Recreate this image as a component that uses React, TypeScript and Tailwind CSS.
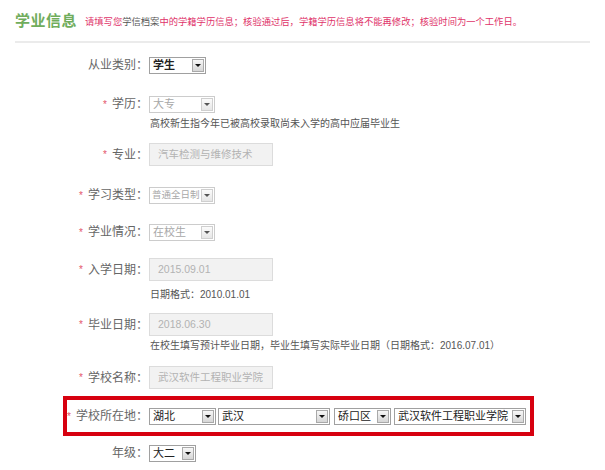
import type { ReactNode } from "react";

type SelectProps = {
  value: string;
  width: string;
  disabled?: boolean;
  bold?: boolean;
  tight?: boolean;
};

const Arrow = ({ disabled }: { disabled?: boolean }) => (
  <span
    className={
      disabled
        ? "flex h-[13px] w-[12px] shrink-0 items-center justify-center border border-[#cfcfcf] bg-gradient-to-b from-[#fbfbfb] to-[#e6e6e6]"
        : "flex h-[13px] w-[12px] shrink-0 items-center justify-center border border-[#a9a9a9] bg-gradient-to-b from-[#f7f7f7] to-[#d6d6d6]"
    }
  >
    <span
      className={
        disabled
          ? "h-0 w-0 border-x-[3px] border-t-[3px] border-x-transparent border-t-[#555]"
          : "h-0 w-0 border-x-[3px] border-t-[3px] border-x-transparent border-t-[#111]"
      }
    />
  </span>
);

const Select = ({ value, width, disabled, bold, tight }: SelectProps) => (
  <div
    className={`${width} flex h-[17px] items-center justify-between bg-white pr-[1px] leading-none ${
      tight ? "pl-[2px] text-[9.5px]" : "pl-[3px] text-[11px]"
    } ${
      disabled
        ? "border border-[#cccccc] text-[#a8a8a8]"
        : "border border-[#a0a0a0] text-[#222]"
    } ${bold ? "font-semibold" : ""}`}
  >
    <span className="whitespace-nowrap">{value}</span>
    <Arrow disabled={disabled} />
  </div>
);

const Field = ({ value }: { value: string }) => (
  <div className="flex h-[23px] w-[124px] items-center border border-[#dcdcdc] bg-[#f2f2f2] pl-[8px] text-[10.5px] text-[#b3b3b3]">
    {value}
  </div>
);

type RowProps = {
  label: string;
  required?: boolean;
  className: string;
  children: ReactNode;
};

const Row = ({ label, required, className, children }: RowProps) => (
  <div className={`flex items-center ${className}`}>
    <div className="flex w-[149px] shrink-0 items-center justify-end pr-[1px] text-[12px] text-[#666]">
      {required && <span className="mr-[5px] text-[10px] text-[#e4566a]">*</span>}
      <span>{label}：</span>
    </div>
    {children}
  </div>
);

const Hint = ({ text, className }: { text: string; className: string }) => (
  <div className={`pl-[150px] text-[10px] leading-[14px] text-[#555] ${className}`}>{text}</div>
);

export default function App() {
  return (
    <div className="h-[470px] w-[605px] overflow-hidden bg-white font-['Liberation_Sans','Noto_Sans_CJK_SC',sans-serif]">
      <div className="flex h-[20px] items-center pl-[15px] pt-[11px] box-content">
        <h2 className="text-[15px] font-semibold tracking-[0.5px] text-[#70ad5c]">学业信息</h2>
        <p className="ml-[8px] mt-[3px] text-[9.3px] text-[#e0336a]">
          请填写您<span className="text-[#555]">学信档案</span>
          中的学籍学历信息；核验通过后，学籍学历信息将不能再修改；核验时间为一个工作日。
        </p>
      </div>
      <div className="mx-[15px] mt-[10px] h-[2px] bg-[#ebebeb]" />

      <Row label="从业类别" className="mt-[13px]">
        <Select value="学生" width="w-[57px]" bold />
      </Row>

      <Row label="学历" required className="mt-[21px]">
        <Select value="大专" width="w-[66px]" disabled />
      </Row>
      <Hint text="高校新生指今年已被高校录取尚未入学的高中应届毕业生" className="mt-[4px]" />

      <Row label="专业" required className="mt-[12px]">
        <Field value="汽车检测与维修技术" />
      </Row>

      <Row label="学习类型" required className="mt-[20px]">
        <Select value="普通全日制" width="w-[66px]" disabled tight />
      </Row>

      <Row label="学业情况" required className="mt-[19px]">
        <Select value="在校生" width="w-[66px]" disabled />
      </Row>

      <Row label="入学日期" required className="mt-[17px]">
        <Field value="2015.09.01" />
      </Row>
      <Hint text="日期格式：2010.01.01" className="mt-[7px]" />

      <Row label="毕业日期" required className="mt-[11px]">
        <Field value="2018.06.30" />
      </Row>
      <Hint
        text="在校生填写预计毕业日期，毕业生填写实际毕业日期（日期格式：2016.07.01）"
        className="mt-[3px]"
      />

      <Row label="学校名称" required className="mt-[13px]">
        <Field value="武汉软件工程职业学院" />
      </Row>

      <div className="ml-[63px] mt-[7px] flex h-[40px] w-[471px] items-center border-4 border-[#d7000f]">
        <div className="flex w-[82px] shrink-0 items-center justify-end pr-[1px] text-[12px] text-[#666]">
          <span className="mr-[5px] text-[10px] text-[#e4566a]">*</span>
          <span>学校所在地：</span>
        </div>
        <div className="flex items-center gap-[2px]">
          <Select value="湖北" width="w-[67px]" />
          <Select value="武汉" width="w-[112px]" />
          <div className="ml-[2px]">
            <Select value="硚口区" width="w-[57px]" />
          </div>
          <div className="ml-[1px]">
            <Select value="武汉软件工程职业学院" width="w-[132px]" />
          </div>
        </div>
      </div>

      <Row label="年级" className="mt-[8px]">
        <Select value="大二" width="w-[47px]" />
      </Row>
    </div>
  );
}
